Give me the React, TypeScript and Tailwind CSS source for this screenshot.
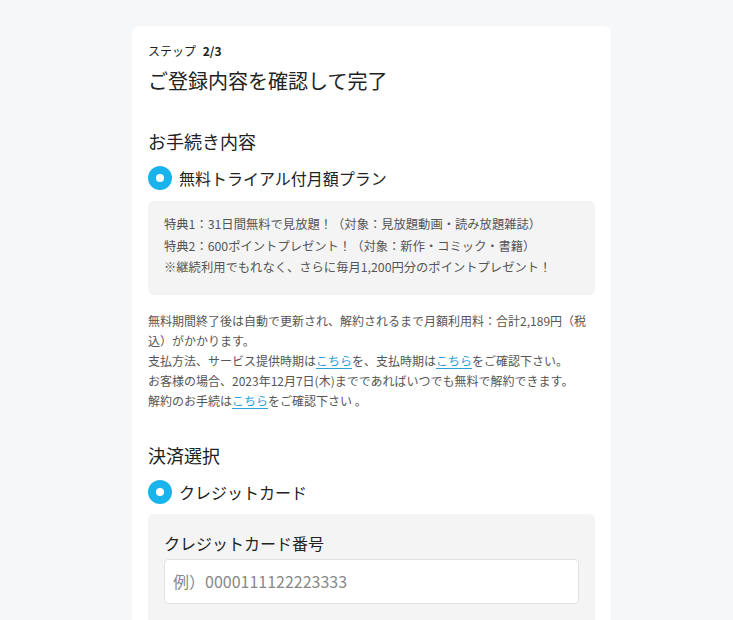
import React from 'react';

const font = { fontFamily: '"Noto Sans CJK JP", "Noto Sans", sans-serif' };

const Radio = () => (
  <span className="flex h-6 w-6 shrink-0 items-center justify-center rounded-full bg-[#1ab4ec]">
    <span className="h-2 w-2 rounded-full bg-white" />
  </span>
);

const Link = ({ children }: { children: React.ReactNode }) => (
  <a className="text-[#2a9fd8] underline underline-offset-2">{children}</a>
);

export default function App() {
  return (
    <div className="min-h-[620px] bg-[#f6f7f9] pt-[26px] pl-[10px]" style={font}>
      <div className="mx-auto w-[479px] rounded-lg bg-white px-4 pt-[16px] pb-10">
        <p className="text-[12px] leading-[18px] text-[#222]">
          ステップ <span className="ml-1 font-bold">2/3</span>
        </p>
        <h1 className="mt-[7px] text-[20px] leading-[28px] text-[#222]">ご登録内容を確認して完了</h1>

        <h2 className="mt-[33px] text-[18px] leading-[26px] text-[#222]">お手続き内容</h2>
        <div className="mt-[12px] flex items-center gap-[7px]">
          <Radio />
          <span className="text-[16px] leading-[24px] text-[#222]">無料トライアル付月額プラン</span>
        </div>
        <div className="mt-[11px] rounded-md bg-[#f4f4f4] px-4 pt-[13px] pb-[16px] text-[12.3px] leading-[21.5px] text-[#555]">
          <p>特典1：31日間無料で見放題！（対象：見放題動画・読み放題雑誌）</p>
          <p>特典2：600ポイントプレゼント！（対象：新作・コミック・書籍）</p>
          <p>※継続利用でもれなく、さらに毎月1,200円分のポイントプレゼント！</p>
        </div>
        <div className="mt-[16px] text-[12px] leading-[20px] text-[#555]">
          <p>無料期間終了後は自動で更新され、解約されるまで月額利用料：合計2,189円（税込）がかかります。</p>
          <p>
            支払方法、サービス提供時期は<Link>こちら</Link>を、支払時期は<Link>こちら</Link>をご確認下さい。
          </p>
          <p>お客様の場合、2023年12月7日(木)までであればいつでも無料で解約できます。</p>
          <p>
            解約のお手続は<Link>こちら</Link>をご確認下さい 。
          </p>
        </div>

        <h2 className="mt-[31px] text-[18px] leading-[26px] text-[#222]">決済選択</h2>
        <div className="mt-[12px] flex items-center gap-[7px]">
          <Radio />
          <span className="text-[16px] leading-[24px] text-[#222]">クレジットカード</span>
        </div>
        <div className="mt-[10px] rounded-md bg-[#f4f4f4] px-4 pt-[17px] pb-6">
          <label className="block text-[16px] leading-[24px] text-[#222]">クレジットカード番号</label>
          <input
            className="mt-[4px] h-[45px] w-full rounded border border-[#e2e2e2] bg-white px-[8px] text-[16px] text-[#333] placeholder:text-[#888] outline-none"
            placeholder="例）0000111122223333"
          />
        </div>
      </div>
    </div>
  );
}
